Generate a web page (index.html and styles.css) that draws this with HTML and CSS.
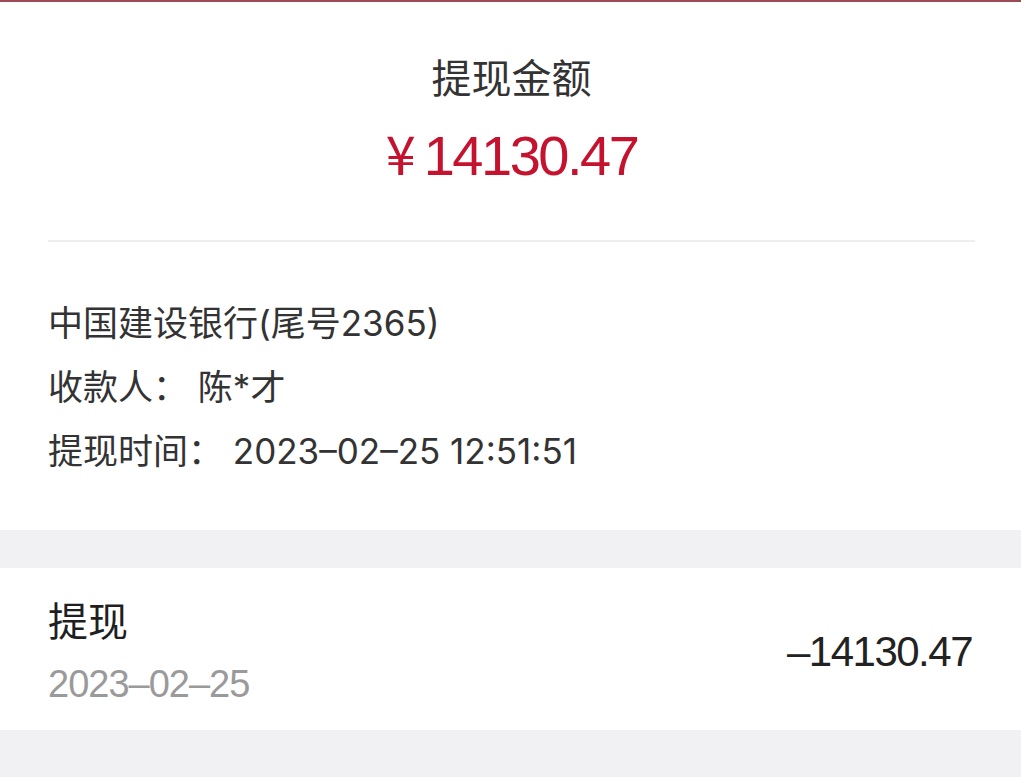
FILE: index.html
```html
<!DOCTYPE html>
<html lang="zh-CN">
<head>
    <meta charset="UTF-8">
    <meta name="viewport" content="width=device-width, initial-scale=1.0">
    <title>提现详情</title>
    <link rel="stylesheet" href="styles.css">
</head>
<body>

    <div class="top-bar"></div>

    <div class="summary">
        <div class="summary-title">提现金额</div>
        <div class="summary-amount"><span class="yen">¥</span>14130.47</div>
        <div class="divider"></div>

        <div class="info">
            <p>中国建设银行(尾号2365)</p>
            <p>收款人： 陈*才</p>
            <p>提现时间： 2023–02–25 12:51:51</p>
        </div>
    </div>

    <div class="gap"></div>

    <div class="record">
        <div class="record-left">
            <div class="record-name">提现</div>
            <div class="record-date">2023–02–25</div>
        </div>
        <div class="record-amount">–14130.47</div>
    </div>

    <div class="gap gap-bottom"></div>

</body>
</html>
```

FILE: styles.css
```css
body {
    font-family: "Liberation Sans", "Noto Sans CJK SC", sans-serif;
    background-color: #fff;
    margin: 0;
    padding: 0;
    color: #333;
}

.top-bar {
    height: 2px;
    background-color: #9b4a56;
}

.summary {
    padding: 0 46px 0 48px;
}

.summary-title {
    text-align: center;
    font-size: 40px;
    line-height: 46px;
    margin-top: 54px;
    color: #333;
}

.summary-amount {
    text-align: center;
    font-size: 56px;
    line-height: 64px;
    height: 64px;
    margin-top: 22px;
    letter-spacing: -2.5px;
    color: #c4122f;
}

.summary-amount .yen {
    font-family: "Noto Sans CJK SC", sans-serif;
    font-size: 54px;
    line-height: 1;
    letter-spacing: 0;
    margin-right: 8px;
}

.divider {
    height: 2px;
    background-color: #eeeeee;
    margin-top: 52px;
}

.info {
    padding: 49px 0 47px;
}

.info p {
    margin: 0;
    font-family: Inter, "Noto Sans CJK SC", sans-serif;
    font-size: 35px;
    line-height: 64px;
    color: #333;
}

.gap {
    height: 38px;
    background-color: #f1f1f3;
}

.gap-bottom {
    height: 47px;
}

.record {
    height: 156px;
    display: flex;
    justify-content: space-between;
    align-items: center;
    padding: 6px 49px 0 48px;
}

.record-name {
    font-size: 40px;
    line-height: 46px;
    color: #1f1f1f;
}

.record-date {
    font-size: 38px;
    line-height: 44px;
    margin-top: 17px;
    letter-spacing: -1px;
    color: #9a9a9a;
}

.record-amount {
    font-size: 42px;
    letter-spacing: -1.5px;
    color: #222;
}
```
